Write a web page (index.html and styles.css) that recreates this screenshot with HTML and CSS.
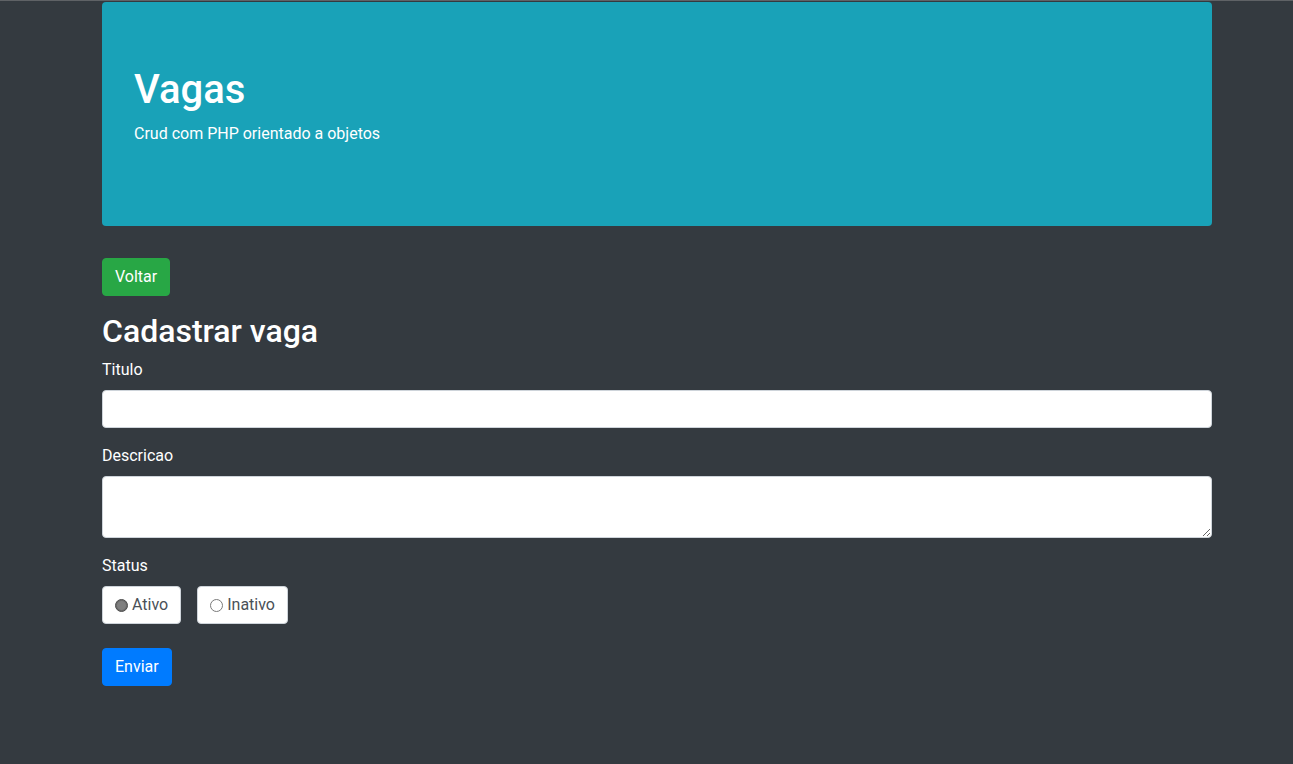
FILE: index.html
```html
<!DOCTYPE html>
<html lang="pt">
<head>
<meta charset="utf-8">
<title>Vagas</title>
<link rel="stylesheet" href="styles.css">
</head>
<body>
<div class="container">
  <div class="jumbotron">
    <h1>Vagas</h1>
    <p>Crud com PHP orientado a objetos</p>
  </div>

  <section>
    <a class="btn btn-success" href="#">Voltar</a>
  </section>

  <h2 class="title">Cadastrar vaga</h2>

  <form>
    <div class="form-group">
      <label class="label">Titulo</label>
      <input type="text" class="form-control">
    </div>
    <div class="form-group">
      <label class="label">Descricao</label>
      <textarea class="form-control" rows="2"></textarea>
    </div>
    <div class="form-group">
      <label class="label">Status</label>
      <div class="radios">
        <div class="radio-box">
          <label><input type="radio" name="status" value="s" checked> Ativo</label>
        </div>
        <div class="radio-box">
          <label><input type="radio" name="status" value="n"> Inativo</label>
        </div>
      </div>
    </div>
    <div class="form-group submit">
      <button type="button" class="btn btn-primary">Enviar</button>
    </div>
  </form>
</div>
</body>
</html>
```

FILE: styles.css
```css
* { box-sizing: border-box; }
html, body {
  margin: 0;
  padding: 0;
}
body {
  background: #343a40;
  color: #fff;
  font-family: "Roboto", "Liberation Sans", Arial, sans-serif;
  font-size: 16px;
  line-height: 1.5;
  border-top: 1px solid #5f6266;
}
.container {
  width: 1110px;
  margin: 0 0 0 102px;
}
.jumbotron {
  background: #19a2b8;
  border-radius: 4px;
  padding: 64px 32px;
  margin: 1px 0 32px;
}
.jumbotron h1 {
  margin: 0 0 8px;
  font-size: 40px;
  font-weight: 500;
  line-height: 1.2;
}
.jumbotron p {
  margin: 0 0 16px;
  font-size: 16px;
}
.btn {
  display: inline-block;
  padding: 6px 12px;
  font-size: 16px;
  line-height: 24px;
  border: 1px solid transparent;
  border-radius: 4px;
  color: #fff;
  text-decoration: none;
  font-family: inherit;
  font-weight: 400;
}
.btn-success { background: #28a745; border-color: #28a745; }
.btn-primary { background: #007bff; border-color: #007bff; }
section { line-height: 0; }
.title {
  margin: 16px 0 8px;
  font-size: 32px;
  font-weight: 500;
  line-height: 1.2;
}
form { margin: 0; }
.form-group { margin-bottom: 16px; }
.label {
  display: inline-block;
  margin-bottom: 8px;
}
.form-control {
  display: block;
  width: 100%;
  height: 38px;
  padding: 6px 12px;
  font-size: 16px;
  line-height: 24px;
  font-family: inherit;
  color: #495057;
  background: #fff;
  border: 1px solid #ced4da;
  border-radius: 4px;
  margin: 0;
}
textarea.form-control {
  height: 62px;
  resize: vertical;
}
.radios {
  display: flex;
  gap: 16px;
}
.radio-box {
  background: #fff;
  color: #495057;
  border: 1px solid #ced4da;
  border-radius: 4px;
  height: 38px;
  padding: 6px 12px;
  line-height: 24px;
}
.radio-box label {
  display: flex;
  align-items: center;
  gap: 4px;
}
.radio-box input {
  appearance: none;
  -webkit-appearance: none;
  margin: 0;
  width: 13px;
  height: 13px;
  border: 1px solid #7a7a7a;
  border-radius: 50%;
  background: #fff;
}
.radio-box input:checked {
  border-color: #4d4d4d;
  background: #7f7f7f;
  box-shadow: inset 0 0 0 1px #6a6a6a;
}
.submit { padding-top: 8px; }
```
